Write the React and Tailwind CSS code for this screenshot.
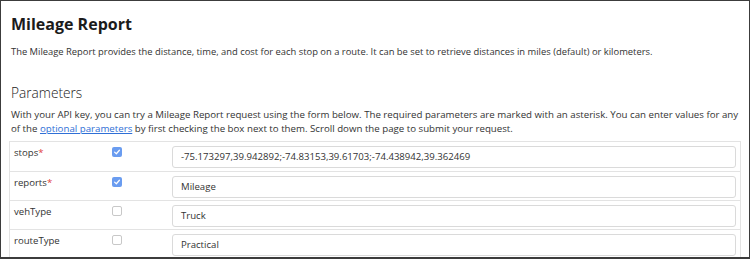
import React from "react";

const rows = [
  { name: "stops", required: true, checked: true, value: "-75.173297,39.942892;-74.83153,39.61703;-74.438942,39.362469" },
  { name: "reports", required: true, checked: true, value: "Mileage" },
  { name: "vehType", required: false, checked: false, value: "Truck" },
  { name: "routeType", required: false, checked: false, value: "Practical" },
];

const CheckBox = ({ checked }) =>
  checked ? (
    <span className="flex h-[10px] w-[10px] items-center justify-center rounded-[2px] bg-[#6a9cf0]">
      <svg viewBox="0 0 10 10" className="h-[8px] w-[8px]">
        <path d="M2 5.2 L4.2 7.2 L8 2.8" fill="none" stroke="white" strokeWidth="1.5" strokeLinecap="round" strokeLinejoin="round" />
      </svg>
    </span>
  ) : (
    <span className="block h-[10px] w-[10px] rounded-[2px] border border-[#c8c8c8] bg-white" />
  );

export default function App() {
  return (
    <div
      className="h-[259px] w-[750px] overflow-hidden border border-b-2 border-[#3c3c3c] bg-white text-[#333]"
      style={{ fontFamily: '"Open Sans", sans-serif' }}
    >
      <div className="px-[10px] pt-[11px]">
        <h1 className="text-[16px] font-bold leading-[24px] text-[#1b1b1b]">Mileage Report</h1>
        <p className="mt-[9px] text-[9.4px] leading-[14px]">
          The Mileage Report provides the distance, time, and cost for each stop on a route. It can be set to retrieve distances in miles (default) or kilometers.
        </p>
        <h2 className="mt-[23px] text-[13.7px] font-light leading-[22px] text-[#222]">Parameters</h2>
        <p className="mt-[4px] text-[9.7px] leading-[14px]">
          With your API key, you can try a Mileage Report request using the form below. The required parameters are marked with an asterisk. You can enter values for any of the{" "}
          <span className="text-[#2f6fd6] underline">optional parameters</span> by first checking the box next to them. Scroll down the page to submit your request.
        </p>
      </div>
      <div className="mx-[8px] mt-[5px] border border-[#e3e3e3]">
        {rows.map((r, i) => (
          <div key={r.name} className={`flex h-[29px] ${i > 0 ? "border-t border-[#e3e3e3]" : ""}`}>
            <div className="w-[102px] pl-[4px] pt-[4px] text-[9.6px] leading-[14px]">
              {r.name}
              {r.required && <span className="text-[#e0403a]">*</span>}
            </div>
            <div className="w-[60px] pt-[5px]">
              <CheckBox checked={r.checked} />
            </div>
            <div className="flex-1 pr-[4px] pt-[4px]">
              <div className="flex h-[22px] items-center rounded-[3px] border border-[#dadada] px-[8px] text-[9.6px]">
                {r.value}
              </div>
            </div>
          </div>
        ))}
      </div>
    </div>
  );
}
